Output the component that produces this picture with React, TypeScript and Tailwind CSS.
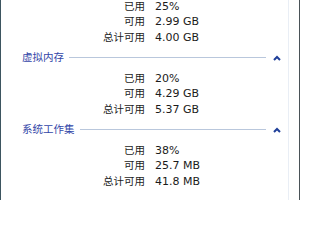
import React from "react";

const sections = [
  { title: "", rows: [["已用", "25%"], ["可用", "2.99 GB"], ["总计可用", "4.00 GB"]] },
  { title: "虚拟内存", rows: [["已用", "20%"], ["可用", "4.29 GB"], ["总计可用", "5.37 GB"]] },
  { title: "系统工作集", rows: [["已用", "38%"], ["可用", "25.7 MB"], ["总计可用", "41.8 MB"]] },
];

const Chevron = () => (
  <svg width="8" height="6" viewBox="0 0 8 6" className="shrink-0">
    <polyline points="1,5 4,2 7,5" fill="none" stroke="#1f3f99" strokeWidth="2" />
  </svg>
);

const App = () => {
  return (
    <div
      className="flex w-[300px] h-[200px] overflow-hidden bg-white text-[11px] text-[#1b1b1b]"
      style={{ fontFamily: "'DejaVu Sans', 'Noto Sans CJK SC', sans-serif" }}
    >
      <div className="w-px bg-[#3d5560] shrink-0" />
      <div className="flex-1 flex flex-col mt-[-1.75px]">
        {sections.map((s, i) => (
          <div key={i} className="flex flex-col">
            {s.title && (
              <div className="h-[25.5px] flex items-center pl-[21px] pr-[7px]">
                <span className="text-[#3346a8] text-[10.5px] leading-none">{s.title}</span>
                <div className="flex-1 h-px bg-[#b9c7dc] ml-[5px] mr-[7px]" />
                <Chevron />
              </div>
            )}
            {s.rows.map(([label, value]) => (
              <div key={label} className="h-[15.5px] flex items-center leading-none">
                <span className="w-[144px] text-right text-[10.5px] shrink-0">{label}</span>
                <span className="ml-[10px]">{value}</span>
              </div>
            ))}
          </div>
        ))}
      </div>
      <div className="w-[11px] border-l border-[#e9eef5] shrink-0" />
      <div className="w-px bg-[#4a5257] shrink-0" />
    </div>
  );
};

export default App;
